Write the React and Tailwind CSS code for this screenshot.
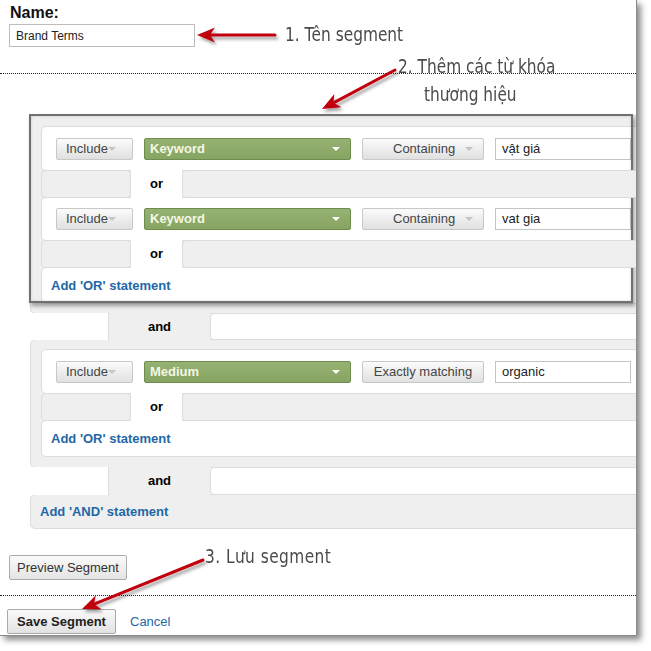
import React from 'react';

// red annotation arrow with a notched head
const Arrow = ({ x1, y1, x2, y2 }) => {
  const dx = x2 - x1;
  const dy = y2 - y1;
  const len = Math.hypot(dx, dy);
  const ux = dx / len;
  const uy = dy / len;
  const nx = -uy;
  const ny = ux;
  const hl = 18;
  const hw = 7.5;
  const bx = x2 - ux * hl;
  const by = y2 - uy * hl;
  const mx = x2 - ux * (hl - 5);
  const my = y2 - uy * (hl - 5);
  const pts = [
    [x2, y2],
    [bx + nx * hw, by + ny * hw],
    [mx, my],
    [bx - nx * hw, by - ny * hw],
  ]
    .map((p) => p.join(','))
    .join(' ');
  return (
    <g filter="url(#shadow)">
      <line x1={x1} y1={y1} x2={mx} y2={my} stroke="#c0000f" strokeWidth="3" strokeLinecap="round" />
      <polygon points={pts} fill="#c0000f" />
    </g>
  );
};

const Caret = ({ color }) => (
  <span className={`inline-block w-0 h-0 border-l-[4px] border-r-[4px] border-t-[4px] border-l-transparent border-r-transparent ${color}`} />
);

const GrayButton = ({ children, className }) => (
  <div
    className={`h-[22px] flex items-center border border-[#c8c8c8] rounded-[2px] bg-gradient-to-b from-[#fbfbfb] to-[#e0e0e0] text-[13px] text-[#444] shrink-0 ${className}`}
  >
    {children}
  </div>
);

const ConditionRow = ({ dimension, match, value, h }) => (
  <div className={`${h} bg-white border border-[#dcdcdc] rounded-[5px] flex items-center pl-[14px] gap-[11px]`}>
    <GrayButton className="w-[77px] pl-[9px]">
      <span>Include</span>
      <Caret color="border-t-[#c4c4c4]" />
    </GrayButton>
    <div className="w-[207px] h-[22px] shrink-0 flex items-center justify-between pl-[5px] pr-[10px] rounded-[2px] border border-[#6f8c4f] bg-gradient-to-b from-[#96b272] to-[#86a462] text-[13px] font-bold text-[#f3f7e4]">
      <span>{dimension}</span>
      <Caret color="border-t-white" />
    </div>
    {match === 'Containing' ? (
      <GrayButton className="w-[122px] pl-[30px]">
        <span>Containing</span>
        <span className="ml-[10px] flex">
          <Caret color="border-t-[#c4c4c4]" />
        </span>
      </GrayButton>
    ) : (
      <GrayButton className="w-[122px] justify-center">
        <span>{match}</span>
      </GrayButton>
    )}
    <div className="w-[136px] h-[22px] shrink-0 border border-[#c4c4c4] bg-white pl-[6px] flex items-center text-[13px] text-[#222]">
      {value}
    </div>
  </div>
);

const OrConnector = () => (
  <div className="relative z-10 -my-px h-[28px] flex">
    <div className="w-[90px] bg-[#efefef] border border-[#dcdcdc] rounded-[4px]" />
    <div className="w-[51px] bg-white flex items-center justify-center text-[13px] font-bold text-black">or</div>
    <div className="flex-1 bg-[#efefef] border border-[#dcdcdc] rounded-[4px]" />
  </div>
);

const AndConnector = ({ h }) => (
  <div className={`relative z-10 -my-px ${h} flex`}>
    <div className="w-[79px] bg-white border-r border-[#dcdcdc]" />
    <div className="w-[101px] bg-[#efefef] flex items-center justify-center text-[13px] font-bold text-black">and</div>
    <div className="flex-1 bg-white border border-[#dcdcdc] rounded-[4px]" />
  </div>
);

const AddOr = ({ h }) => (
  <div className={`${h} bg-white border border-[#dcdcdc] rounded-[5px] flex items-center pl-[9px] text-[13px] font-bold text-[#1f67a6]`}>
    Add 'OR' statement
  </div>
);

const note = "absolute origin-left scale-x-[0.9] font-['DejaVu_Sans_Condensed','Liberation_Sans_Narrow','DejaVu_Sans',sans-serif] text-[19px] leading-[20px] text-[#4a4a4a] whitespace-nowrap";

export default function App() {
  return (
    <div className="w-[651px] h-[651px] bg-white font-['Liberation_Sans',Arial,sans-serif]">
      <div className="relative w-[637px] h-[636px] bg-white overflow-hidden border-r border-b border-[#8a8a8a] shadow-[4px_4px_6px_rgba(0,0,0,0.45)]">
        {/* name field */}
        <div className="pt-[3px] pl-[10px] text-[16px] font-bold leading-[20px] text-[#111]">Name:</div>
        <div className="ml-[9px] mt-[1px] w-[186px] h-[23px] border border-[#bdbdbd] pl-[6px] flex items-center text-[12px] text-[#222]">
          Brand Terms
        </div>
        <div className="mt-[26px] border-t border-dotted border-[#222]" />

        {/* segment definition */}
        <div className="mt-[41px] ml-[30px] w-[620px]">
          <div className="bg-[#efefef] border border-[#dcdcdc] rounded-[5px] pt-[10px] pb-[9px] pl-[10px]">
            <ConditionRow h="h-[45px]" dimension="Keyword" match="Containing" value="vật giá" />
            <OrConnector />
            <ConditionRow h="h-[44px]" dimension="Keyword" match="Containing" value="vat gia" />
            <OrConnector />
            <AddOr h="h-[37px]" />
          </div>
          <AndConnector h="h-[27px]" />
          <div className="bg-[#efefef] border border-[#dcdcdc] rounded-[5px] pt-[9px] pb-[10px] pl-[10px]">
            <ConditionRow h="h-[45px]" dimension="Medium" match="Exactly matching" value="organic" />
            <OrConnector />
            <AddOr h="h-[37px]" />
          </div>
          <AndConnector h="h-[28px]" />
          <div className="h-[35px] bg-[#efefef] border border-[#dcdcdc] rounded-[5px] flex items-center pl-[9px] text-[13px] font-bold text-[#1f67a6]">
            Add 'AND' statement
          </div>
        </div>

        {/* actions */}
        <div className="mt-[26px] ml-[9px] w-[118px] h-[25px] border border-[#ababab] rounded-[2px] bg-gradient-to-b from-[#fafafa] to-[#e4e4e4] flex items-center justify-center text-[13px] text-[#333]">
          Preview Segment
        </div>
        <div className="mt-[15px] border-t border-dotted border-[#222]" />
        <div className="mt-[13px] ml-[7px] flex items-center gap-[14px]">
          <div className="w-[109px] h-[25px] border border-[#a8a8a8] rounded-[2px] bg-gradient-to-b from-[#fafafa] to-[#e2e2e2] flex items-center justify-center text-[13px] font-bold text-[#222]">
            Save Segment
          </div>
          <span className="text-[13px] text-[#1f67a6]">Cancel</span>
        </div>

        {/* highlight around the brand keyword group */}
        <div className="absolute left-[29px] top-[114px] w-[604px] h-[189px] border-2 border-[#707070] shadow-[2px_3px_4px_rgba(0,0,0,0.35),inset_0_0_3px_rgba(0,0,0,0.15)] pointer-events-none" />

        {/* annotations */}
        <span className={`${note} left-[285px] top-[24px]`}>1. Tên segment</span>
        <span className={`${note} left-[398px] top-[56px]`}>2. Thêm các từ khóa</span>
        <span className={`${note} left-[424px] top-[84px]`}>thương hiệu</span>
        <span className={`${note} left-[205px] top-[546px] tracking-[0.5px]`}>3. Lưu segment</span>

        <svg className="absolute inset-0 pointer-events-none" width="637" height="636">
          <defs>
            <filter id="shadow" x="-20%" y="-20%" width="140%" height="160%">
              <feDropShadow dx="2" dy="3" stdDeviation="1.8" floodColor="#000" floodOpacity="0.35" />
            </filter>
          </defs>
          <Arrow x1={275} y1={35} x2={197} y2={35} />
          <Arrow x1={395} y1={70} x2={322} y2={109} />
          <Arrow x1={203} y1={560} x2={82} y2={609} />
        </svg>
      </div>
    </div>
  );
}
